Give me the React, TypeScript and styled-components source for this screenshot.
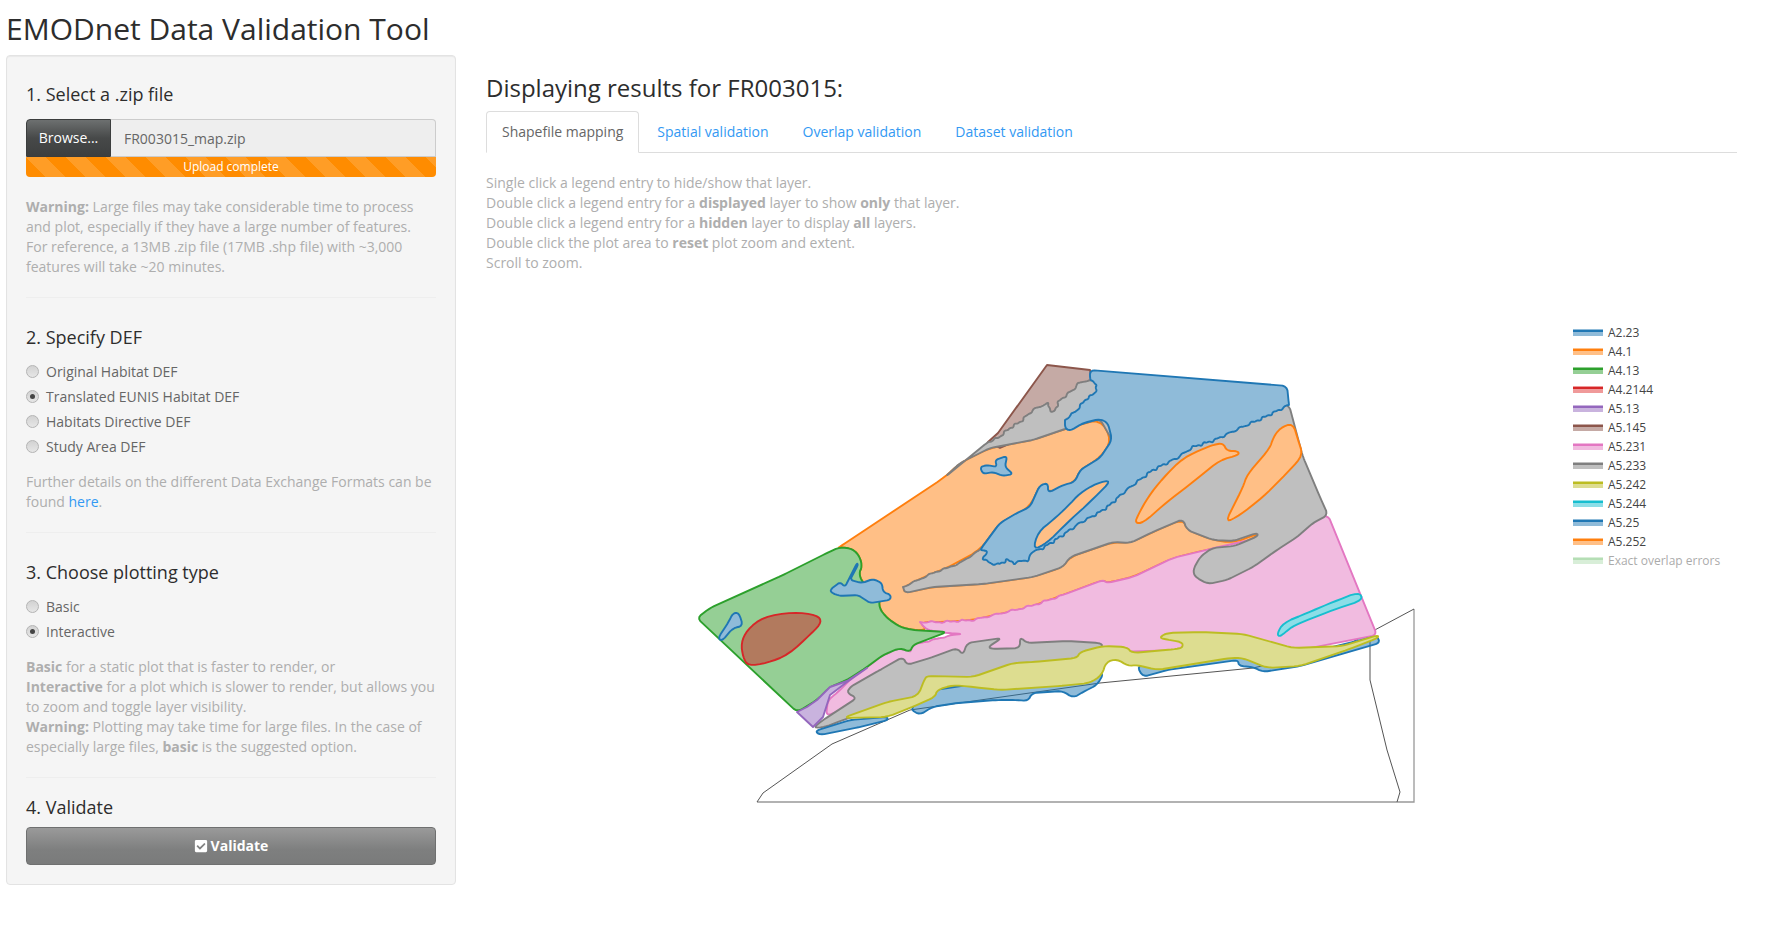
import * as React from 'react';
import styled, { createGlobalStyle } from 'styled-components';
import { FaCheckSquare } from 'react-icons/fa';

const GlobalStyle = createGlobalStyle`
  html, body {
    margin: 0;
    background: #fff;
    font-family: "Open Sans", "Liberation Sans", sans-serif;
    font-size: 14px;
    line-height: 20px;
    color: #666;
  }
`;

const Title = styled.h2`
  margin: 12px 0 10px;
  padding: 0 6px;
  font-size: 30px;
  line-height: 33px;
  font-weight: 400;
  color: #2d2d2d;
`;

const Page = styled.div`
  display: flex;
  align-items: flex-start;
  padding: 0 51px 0 6px;
`;

const Well = styled.aside`
  box-sizing: border-box;
  flex: 0 0 450px;
  padding: 19px;
  background: #f5f5f5;
  border: 1px solid #e3e3e3;
  border-radius: 4px;
  box-shadow: inset 0 1px 1px rgba(0, 0, 0, 0.05);
`;

const StepTitle = styled.h4<{ $gap: number }>`
  margin: 9px 0 ${p => p.$gap}px;
  padding-bottom: 1px;
  font-size: 18px;
  line-height: 20px;
  font-weight: 400;
  color: #2d2d2d;
`;

const FileRow = styled.div`
  display: flex;
  height: 38px;
`;

const Browse = styled.span`
  box-sizing: border-box;
  flex: 0 0 85px;
  display: flex;
  align-items: center;
  justify-content: center;
  color: #fff;
  background: linear-gradient(#6d7070, #474949 50%, #3d3f3f);
  border: 1px solid #3b3d3d;
  border-radius: 4px 0 0 0;
`;

const FileName = styled.span`
  box-sizing: border-box;
  flex: 1;
  display: flex;
  align-items: center;
  padding: 2px 0 0 13px;
  color: #666;
  background: #eee;
  border: 1px solid #ccc;
  border-left: 0;
  border-radius: 0 4px 0 0;
`;

const Progress = styled.div`
  height: 20px;
  font-size: 12px;
  line-height: 20px;
  text-align: center;
  color: #fff;
  background-color: #ff8c00;
  background-image: linear-gradient(
    45deg,
    rgba(255, 255, 255, 0.15) 25%,
    transparent 25%,
    transparent 50%,
    rgba(255, 255, 255, 0.15) 50%,
    rgba(255, 255, 255, 0.15) 75%,
    transparent 75%,
    transparent
  );
  background-size: 40px 40px;
  border-radius: 0 0 4px 4px;
`;

const Note = styled.p<{ $top?: number }>`
  margin: ${p => p.$top ?? 13}px 0 20px;
  color: #aeaeae;
`;

const Anchor = styled.a`
  color: #3399f3;
`;

const Divider = styled.hr<{ $tight?: boolean }>`
  height: 1px;
  margin: 0 0 ${p => (p.$tight ? 19 : 29)}px;
  border: 0;
  background: #eee;
`;

const RadioRow = styled.label`
  display: flex;
  align-items: center;
  height: 25px;
  color: #666;
`;

const Radio = styled.input.attrs({ type: 'radio' })`
  appearance: none;
  box-sizing: border-box;
  display: grid;
  place-items: center;
  width: 13px;
  height: 13px;
  margin: 0 7px 0 0;
  background: linear-gradient(#d2d2d2, #e6e6e6);
  border: 1px solid #b4b4b4;
  border-radius: 50%;

  &:checked::after {
    content: '';
    width: 5px;
    height: 5px;
    background: #444;
    border-radius: 50%;
  }
`;

const ValidateButton = styled.button`
  display: flex;
  align-items: center;
  justify-content: center;
  gap: 3px;
  width: 100%;
  height: 38px;
  padding: 0;
  font: 700 14px/20px "Open Sans", "Liberation Sans", sans-serif;
  color: #fff;
  background: linear-gradient(#9a9a9a, #7e7f7f 60%, #7a7b7b);
  border: 1px solid #6f7070;
  border-radius: 4px;
`;

const Main = styled.main`
  flex: 1;
  min-width: 0;
  margin-left: 30px;
`;

const ResultTitle = styled.h3`
  margin: 20px 0 10px;
  font-size: 24px;
  line-height: 26px;
  font-weight: 400;
  color: #2d2d2d;
`;

const Tabs = styled.ul`
  display: flex;
  height: 41px;
  margin: 0 0 20px;
  padding: 0;
  list-style: none;
  border-bottom: 1px solid #ddd;
`;

const Tab = styled.li<{ $active?: boolean }>`
  box-sizing: border-box;
  height: 42px;
  margin-right: 2px;
  padding: 10px 15px;
  color: ${p => (p.$active ? '#666' : '#3399f3')};
  background: ${p => (p.$active ? '#fff' : 'transparent')};
  border: 1px solid ${p => (p.$active ? '#ddd' : 'transparent')};
  border-bottom-color: ${p => (p.$active ? '#fff' : 'transparent')};
  border-radius: 4px 4px 0 0;
`;

const Hints = styled.div`
  color: #aeaeae;
`;

const PlotRow = styled.div`
  display: flex;
  align-items: flex-start;
  margin-top: 47px;
`;

const Plot = styled.svg`
  flex: none;
  display: block;
  margin-left: 194px;
`;

const Area = styled.polygon<{ $fill: string; $line: string; $alpha?: number }>`
  fill: ${p => p.$fill};
  fill-opacity: ${p => p.$alpha ?? 1};
  stroke: ${p => p.$line};
  stroke-width: 1.9;
  stroke-linejoin: round;
`;

const Frame = styled.polyline<{ $dark?: boolean }>`
  fill: none;
  stroke: ${p => (p.$dark ? '#555' : '#999')};
  stroke-width: ${p => (p.$dark ? 1 : 1.3)};
`;

const Legend = styled.ul`
  margin: 3px 0 0 133px;
  padding: 0;
  list-style: none;
`;

const LegendRow = styled.li<{ $faded?: boolean }>`
  display: flex;
  align-items: center;
  gap: 5px;
  height: 19px;
  font-size: 12px;
  color: #444;
  opacity: ${p => (p.$faded ? 0.45 : 1)};
  white-space: nowrap;
`;

const Swatch = styled.i<{ $line: string; $fill: string }>`
  display: block;
  width: 30px;
  height: 7px;
  background: linear-gradient(${p => p.$fill} 1px, ${p => p.$line} 1px, ${p => p.$line} 3px, ${p => p.$fill} 3px);
`;

const C = {
  blue: ['#1f77b4', '#8fbbd9'],
  orange: ['#ff7f0e', '#ffbf86'],
  green: ['#2ca02c', '#95cf95'],
  red: ['#d62728', '#b27a5e'],
  purple: ['#9467bd', '#c9b3de'],
  brown: ['#8c564b', '#c5aaa5'],
  pink: ['#e377c2', '#f1bbe0'],
  gray: ['#7f7f7f', '#bfbfbf'],
  olive: ['#bcbd22', '#dddd90'],
  cyan: ['#17becf', '#8bdee7'],
};

const parse = (pts: string) =>
  pts
    .trim()
    .split(/\s+/)
    .map(s => s.split(',').map(Number));

// wobble a stretch of coast so that it does not look ruled
const rough = (pts: string, amp: number, step = 4) => {
  const p = parse(pts);
  const out: string[] = [];
  let n = 0;
  for (let i = 0; i < p.length - 1; i++) {
    const [x0, y0] = p[i];
    const [x1, y1] = p[i + 1];
    const len = Math.hypot(x1 - x0, y1 - y0);
    const parts = Math.max(1, Math.round(len / step));
    for (let k = 0; k < parts; k++) {
      const t = k / parts;
      const off = amp * Math.sin(n * 2.4) * Math.cos(n * 0.9);
      out.push(`${(x0 + (x1 - x0) * t - ((y1 - y0) / len) * off).toFixed(1)},${(y0 + (y1 - y0) * t + ((x1 - x0) / len) * off).toFixed(1)}`);
      n++;
    }
  }
  out.push(p[p.length - 1].join(','));
  return out.join(' ');
};

// corner cutting, so hand-picked vertices read as a traced curve
const soft = (pts: string, cut = 6, rounds = 2) => {
  let p = parse(pts);
  for (let r = 0; r < rounds; r++) {
    const next: number[][] = [];
    p.forEach((a, i) => {
      const b = p[(i + 1) % p.length];
      const len = Math.hypot(b[0] - a[0], b[1] - a[1]) || 1;
      const d = Math.min(cut, len * 0.25) / len;
      next.push([a[0] + (b[0] - a[0]) * d, a[1] + (b[1] - a[1]) * d]);
      next.push([b[0] - (b[0] - a[0]) * d, b[1] - (b[1] - a[1]) * d]);
    });
    p = next;
    cut /= 2;
  }
  return p.map(q => `${q[0].toFixed(1)},${q[1].toFixed(1)}`).join(' ');
};

const orangeMain = `838,548 945,477 960,463 990,448 1033,440 1065,429 1100,419 1112,440 1100,458 1080,470 1075,482 1048,493 1040,485 1030,507 1000,523 980,550 947,568 933,573 903,587 905,593 933,587 983,584 1033,577 1063,567 1070,557 1113,542 1130,543 1153,532 1183,519 1187,530 1213,540 1233,543 1257,534 1258,536 1235,546 1210,549 1173,558 1133,577 1107,583 1103,580 1063,595 1027,608 973,620 943,622 920,622 927,630 913,630 900,627 887,618 879,608 880,595 862,582 859,573 862,567 860,557 853,549 840,547`;

const pinkMain = `920,622 ${rough('920,622 943,622 973,620 1027,607 1040,603 1063,595', 1.6)} 1103,580 1107,583 1133,577 1173,558 1210,549 1250,540 1328,515 1377,635 1300,650 1180,650 1110,652 1060,660 1000,668 930,680 880,695 826,716 828,700 837,693 853,677 870,665 ${rough('883,655 900,648 910,652 913,645 952,635', 1)} 963,634 947,633 928,630 923,626`;

const greenMain = `697,618 710,608 783,575 827,553 840,547 853,549 860,557 862,567 859,573 862,582 880,595 879,608 887,618 900,627 913,630 947,632 913,645 910,652 900,648 883,655 867,667 847,680 830,687 817,700 797,712`;

const grayUpper = `945,477 ${rough('988,442 998,438 1010,428 1020,422 1033,410 1047,403 1053,413 1060,400 1073,390 1080,382 1090,380', 2, 3)} 1289,405 1303,457 1320,497 1328,515 1313,523 1297,537 1277,550 1253,567 1227,580 1208,584 1195,577 1193,570 1200,557 1212,548 1235,546 1258,536 1257,533 1233,541 1213,540 1187,530 1183,519 1153,532 1130,543 1113,542 1070,557 1063,567 1033,577 983,584 933,587 905,593 903,587 ${rough('903,587 933,573 947,568 960,563 980,550', 1.2)} 1000,523 1030,507 1040,485 1048,493 1075,482 1080,470 1100,458 1112,440 1100,419 1065,429 1033,440 990,448 960,463`;

const grayLower = `813,728 823,720 857,698 847,693 850,687 880,670 903,657 907,665 933,657 957,648 963,655 967,643 1002,638 988,647 993,649 1020,648 1020,637 1027,643 1067,641 1100,643 1103,646 1060,668 1000,678 930,690 905,703 870,712 843,720 825,727`;

const purple = `797,712 807,707 817,700 830,687 847,681 867,668 847,682 830,695 823,717 813,727`;

const brown = `1047,365 1090,370 1095,400 1053,425 1000,448 988,442 998,433`;

const blueMain = `1090,370 1287,386 1289,405 ${rough('1289,405 1263,418 1240,428 1215,440 1193,447 1177,458 1153,470 1133,485 1123,493 1110,505 1100,512 1080,523 1060,537 1043,548 1033,552', 2, 3)} ${rough('1033,552 1028,560 1015,563 1007,560 997,565 983,560 987,552 980,550', 2.4, 3)} 1000,523 1017,513 1030,507 1040,485 1048,483 1048,493 1063,485 1075,482 1080,470 1100,458 1112,440 1108,423 1100,419 1083,423 1070,431 1065,428 1065,420 ${rough('1065,420 1077,410 1085,400 1095,393 1097,385 1090,380', 1.6, 3)}`;

const blueInner = `1112,480 1097,483 1080,493 1067,507 1053,520 1038,532 1033,550 1047,543 1067,523 1090,502`;

const orangeIslandA = `1135,523 1138,515 1148,497 1163,478 1183,458 1205,448 1213,445 1223,443 1227,451 1238,451 1239,455 1220,460 1193,482 1167,502 1143,523`;
const orangeIslandB = `1225,523 1243,487 1247,475 1270,448 1273,438 1280,428 1293,423 1298,440 1303,455 1290,470 1263,497 1240,515`;

const blueLeft = `718,638 728,623 733,613 739,613 743,626 733,628 722,641`;
const bluePatch = `830,590 840,582 845,587 857,563 858,565 850,580 862,583 873,579 882,583 883,592 891,595 890,600 870,603 858,595 840,596 832,593`;
const blueSmall = `980,467 987,465 997,467 995,460 1007,456 1005,467 1013,474 1003,476 993,472 983,474`;
const red = `748,666 743,657 741,643 747,630 763,617 793,612 817,615 822,622 812,633 788,655 767,663`;
const cyan = `1359,592 1363,600 1333,610 1300,623 1290,628 1280,637 1277,634 1283,623 1307,613 1333,602`;

const blueStripA = `815,731 850,720 887,717 888,720 860,727 820,735`;
const blueStripB = `910,709 920,715 932,707 957,703 997,700 1017,700 1028,701 1032,693 1063,691 1073,698 1083,692 1097,685 1104,673 1090,670 1000,680 935,690`;
const blueStripC = `1137,666 1143,677 1167,670 1238,660 1239,666 1253,667 1263,672 1300,666 1380,643 1377,636 1300,655 1230,654`;

const olive = `843,718 887,702 918,696 925,678 928,676 973,677 1013,663 1033,662 1077,658 1080,652 1103,646 1127,647 1132,653 1177,649 1183,647 1182,642 1163,639 1160,637 1167,633 1200,632 1243,634 1293,648 1343,646 1378,635 1378,638 1347,650 1300,666 1267,668 1243,658 1230,658 1157,670 1137,665 1128,666 1117,659 1106,662 1102,675 1090,683 1060,686 1000,690 973,687 953,685 937,690 935,697 910,708 887,717`;

const LEGEND = [
  ['A2.23', C.blue],
  ['A4.1', C.orange],
  ['A4.13', C.green],
  ['A4.2144', ['#d62728', '#f09a9a']],
  ['A5.13', C.purple],
  ['A5.145', C.brown],
  ['A5.231', C.pink],
  ['A5.233', C.gray],
  ['A5.242', C.olive],
  ['A5.244', C.cyan],
  ['A5.25', C.blue],
  ['A5.252', C.orange],
] as const;

const RadioGroup = ({ name, options, value }: { name: string; options: string[]; value: string }) => (
  <div>
    {options.map(o => (
      <RadioRow key={o}>
        <Radio name={name} defaultChecked={o === value} />
        {o}
      </RadioRow>
    ))}
  </div>
);

const MapPlot = () => (
  <Plot width={760} height={490} viewBox="680 320 760 490">
    <Frame points="757,802 1414,802 1414,609" />
    <Frame $dark points="1414,609 1343,647 1253,668 1100,683 910,710 832,744 763,793 757,802" />
    <Frame $dark points="1370,631 1370,680 1387,750 1400,792 1397,802" />
    <Area points={soft(orangeMain)} $fill={C.orange[1]} $line={C.orange[0]} />
    <Area points={soft(pinkMain, 3)} $fill={C.pink[1]} $line={C.pink[0]} />
    <Area points={soft(greenMain, 3)} $fill={C.green[1]} $line={C.green[0]} />
    <Area points={brown} $fill={C.brown[1]} $line={C.brown[0]} />
    <Area points={soft(grayUpper, 3)} $fill={C.gray[1]} $line={C.gray[0]} />
    <Area points={soft(orangeIslandA)} $fill={C.orange[1]} $line={C.orange[0]} />
    <Area points={soft(orangeIslandB)} $fill={C.orange[1]} $line={C.orange[0]} />
    <Area points={soft(grayLower, 3)} $fill={C.gray[1]} $line={C.gray[0]} />
    <Area points={purple} $fill={C.purple[1]} $line={C.purple[0]} />
    <Area points={soft(blueMain, 3)} $fill={C.blue[1]} $line={C.blue[0]} />
    <Area points={soft(blueInner)} $fill={C.orange[1]} $line={C.blue[0]} />
    <Area points={soft(blueLeft, 3)} $fill={C.blue[1]} $line={C.blue[0]} />
    <Area points={soft(bluePatch, 2)} $fill={C.blue[1]} $line={C.blue[0]} />
    <Area points={soft(blueSmall, 2)} $fill={C.blue[1]} $line={C.blue[0]} />
    <Area points={soft(red, 12)} $fill={C.red[1]} $line={C.red[0]} />
    <Area points={soft(cyan, 6)} $fill={C.cyan[1]} $line={C.cyan[0]} />
    <Area points={soft(blueStripA, 3)} $fill={C.blue[0]} $alpha={0.5} $line={C.blue[0]} />
    <Area points={soft(blueStripB, 3)} $fill={C.blue[0]} $alpha={0.5} $line={C.blue[0]} />
    <Area points={soft(blueStripC, 3)} $fill={C.blue[0]} $alpha={0.5} $line={C.blue[0]} />
    <Area points={soft(olive, 4)} $fill={C.olive[1]} $line={C.olive[0]} />
  </Plot>
);

export default function App() {
  return (
    <React.Fragment>
      <GlobalStyle />
      <Title>EMODnet Data Validation Tool</Title>
      <Page>
        <Well>
          <StepTitle $gap={14}>1. Select a .zip file</StepTitle>
          <FileRow>
            <Browse>Browse...</Browse>
            <FileName>FR003015_map.zip</FileName>
          </FileRow>
          <Progress>Upload complete</Progress>
          <Note $top={20}>
            <b>Warning:</b> Large files may take considerable time to process
            <br />
            and plot, especially if they have a large number of features.
            <br />
            For reference, a 13MB .zip file (17MB .shp file) with ~3,000
            <br />
            features will take ~20 minutes.
          </Note>
          <Divider />

          <StepTitle $gap={11}>2. Specify DEF</StepTitle>
          <RadioGroup
            name="def"
            value="Translated EUNIS Habitat DEF"
            options={['Original Habitat DEF', 'Translated EUNIS Habitat DEF', 'Habitats Directive DEF', 'Study Area DEF']}
          />
          <Note>
            Further details on the different Data Exchange Formats can be found <Anchor>here</Anchor>.
          </Note>
          <Divider />

          <StepTitle $gap={11}>3. Choose plotting type</StepTitle>
          <RadioGroup name="plot" value="Interactive" options={['Basic', 'Interactive']} />
          <Note>
            <b>Basic</b> for a static plot that is faster to render, or
            <br />
            <b>Interactive</b> for a plot which is slower to render, but allows you to zoom and toggle layer visibility.
            <br />
            <b>Warning:</b> Plotting may take time for large files. In the case of especially large files,{' '}
            <b>basic</b> is the suggested option.
          </Note>
          <Divider $tight />

          <StepTitle $gap={9}>4. Validate</StepTitle>
          <ValidateButton>
            <FaCheckSquare size={14} />
            Validate
          </ValidateButton>
        </Well>

        <Main>
          <ResultTitle>Displaying results for FR003015:</ResultTitle>
          <Tabs>
            <Tab $active>Shapefile mapping</Tab>
            <Tab>Spatial validation</Tab>
            <Tab>Overlap validation</Tab>
            <Tab>Dataset validation</Tab>
          </Tabs>
          <Hints>
            Single click a legend entry to hide/show that layer.
            <br />
            Double click a legend entry for a <b>displayed</b> layer to show <b>only</b> that layer.
            <br />
            Double click a legend entry for a <b>hidden</b> layer to display <b>all</b> layers.
            <br />
            Double click the plot area to <b>reset</b> plot zoom and extent.
            <br />
            Scroll to zoom.
          </Hints>
          <PlotRow>
            <MapPlot />
            <Legend>
              {LEGEND.map(([label, [line, fill]]) => (
                <LegendRow key={label}>
                  <Swatch $line={line} $fill={fill} />
                  {label}
                </LegendRow>
              ))}
              <LegendRow $faded>
                <Swatch $line="#5cb85c" $fill="#a9dba9" />
                Exact overlap errors
              </LegendRow>
            </Legend>
          </PlotRow>
        </Main>
      </Page>
    </React.Fragment>
  );
}
